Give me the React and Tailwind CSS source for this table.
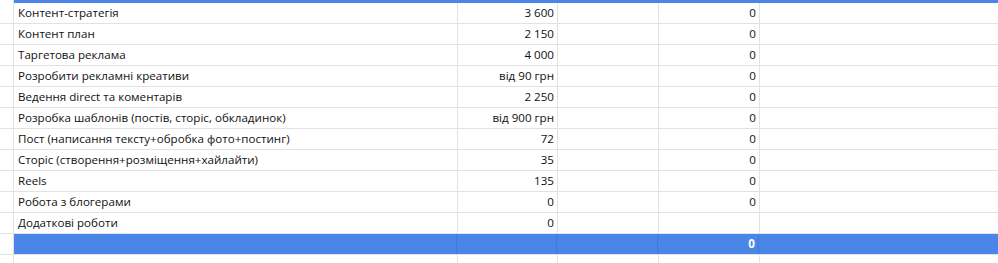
import React from "react";

const rows = [
  ["Контент-стратегія", "3 600", "0"],
  ["Контент план", "2 150", "0"],
  ["Таргетова реклама", "4 000", "0"],
  ["Розробити рекламні креативи", "від 90 грн", "0"],
  ["Ведення direct та коментарів", "2 250", "0"],
  ["Розробка шаблонів (постів, сторіс, обкладинок)", "від 900 грн", "0"],
  ["Пост (написання тексту+обробка фото+постинг)", "72", "0"],
  ["Сторіс (створення+розміщення+хайлайти)", "35", "0"],
  ["Reels", "135", "0"],
  ["Робота з блогерами", "0", "0"],
  ["Додаткові роботи", "0", ""],
];

const cell = "h-full border-r border-[#e2e2e2] flex items-end pb-[3px]";

const Row = ({ name, price, total }) => (
  <div className="flex h-[21px] border-b border-[#e2e2e2]">
    <div className={`${cell} w-[14px] shrink-0`} />
    <div className={`${cell} w-[444px] shrink-0 pl-[4px]`}>{name}</div>
    <div className={`${cell} w-[100px] shrink-0 justify-end pr-[3px]`}>{price}</div>
    <div className={`${cell} w-[101px] shrink-0`} />
    <div className={`${cell} w-[101px] shrink-0 justify-end pr-[3px]`}>{total}</div>
    <div className="flex-1" />
  </div>
);

export default function App() {
  return (
    <div
      className="w-[998px] h-[263px] overflow-hidden bg-white text-[#111] text-[11.6px] leading-[14px]"
      style={{ fontFamily: '"Open Sans", "Noto Sans", sans-serif' }}
    >
      <div className="flex h-[3px]">
        <div className="w-[14px] shrink-0 border-r border-[#e2e2e2]" />
        <div className="flex-1 bg-[#4a86e8]" />
      </div>
      {rows.map(([name, price, total]) => (
        <Row key={name} name={name} price={price} total={total} />
      ))}
      {/* total row */}
      <div className="flex h-[21px] border-b border-[#e2e2e2]">
        <div className="w-[14px] shrink-0 border-r border-[#e2e2e2]" />
        <div className="flex flex-1 bg-[#4a86e8] text-white font-bold">
          <div className="w-[443px] shrink-0 border-r border-[#4179d6]" />
          <div className="w-[100px] shrink-0 border-r border-[#4179d6]" />
          <div className="w-[101px] shrink-0 border-r border-[#4179d6]" />
          <div className="w-[101px] shrink-0 border-r border-[#4179d6] flex items-end justify-end pb-[3px] pr-[3px]">
            0
          </div>
          <div className="flex-1" />
        </div>
      </div>
      <div className="flex h-[21px]">
        <div className="w-[14px] shrink-0 border-r border-[#e2e2e2]" />
        <div className="w-[444px] shrink-0 border-r border-[#e2e2e2]" />
        <div className="w-[100px] shrink-0 border-r border-[#e2e2e2]" />
        <div className="w-[101px] shrink-0 border-r border-[#e2e2e2]" />
        <div className="w-[101px] shrink-0 border-r border-[#e2e2e2]" />
      </div>
    </div>
  );
}
